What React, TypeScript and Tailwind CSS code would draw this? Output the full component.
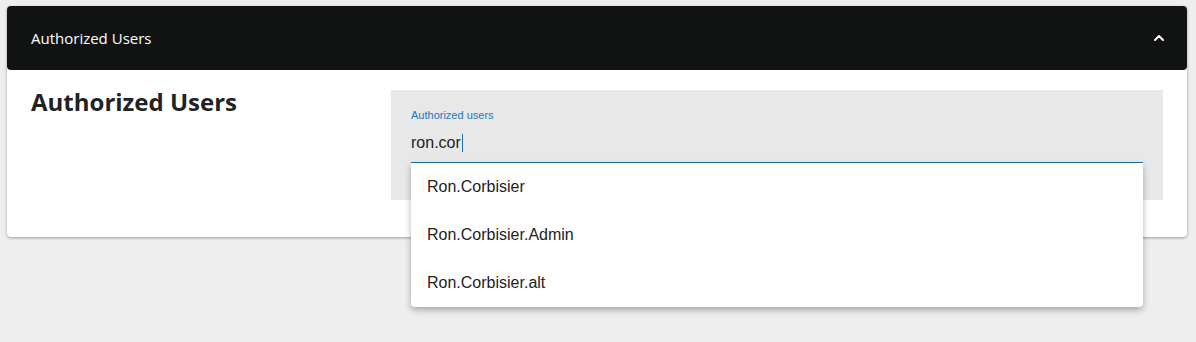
import { ChevronUp } from 'lucide-react'

const options = ['Ron.Corbisier', 'Ron.Corbisier.Admin', 'Ron.Corbisier.alt']

export default function App() {
  return (
    <div className="min-h-[342px] w-full bg-[#eeeeee] pt-[6px] px-[7px] font-['Open_Sans',sans-serif]">
      <div className="w-[1180px] rounded-[4px] bg-white shadow-[0_1px_3px_rgba(0,0,0,0.35)]">
        <div className="flex h-16 items-center justify-between rounded-[4px] bg-[#111312] pl-6 pr-[20px] text-white">
          <span className="text-[15px]">Authorized Users</span>
          <ChevronUp size={16} strokeWidth={3} />
        </div>

        <div className="flex px-6 pt-5 pb-[37px]">
          <h2 className="w-[360px] shrink-0 -mt-[4px] text-[24px] leading-[32px] font-bold text-[#222]">Authorized Users</h2>

          <div className="relative h-[110px] flex-1 bg-[#e8e8e8] px-5 pt-[18px] font-['Liberation_Sans',Arial,sans-serif]">
            <div className="text-[11px] leading-[14px] text-[#1a78c2]">Authorized users</div>
            <div className="mt-[10px] flex h-[22px] items-center border-b border-[#1a6fb5] pb-[8px] box-content text-[16px] text-[#222]">
              ron.cor
              <span className="ml-[1px] inline-block h-[18px] w-px bg-[#1a6fb5]" />
            </div>

            <div className="absolute left-5 right-5 top-[73px] z-10 rounded-b-[4px] bg-white shadow-[0_3px_6px_rgba(0,0,0,0.3)]">
              {options.map((o) => (
                <div key={o} className="flex h-12 items-center px-4 text-[16px] text-[#222]">
                  {o}
                </div>
              ))}
            </div>
          </div>
        </div>
      </div>
    </div>
  )
}
